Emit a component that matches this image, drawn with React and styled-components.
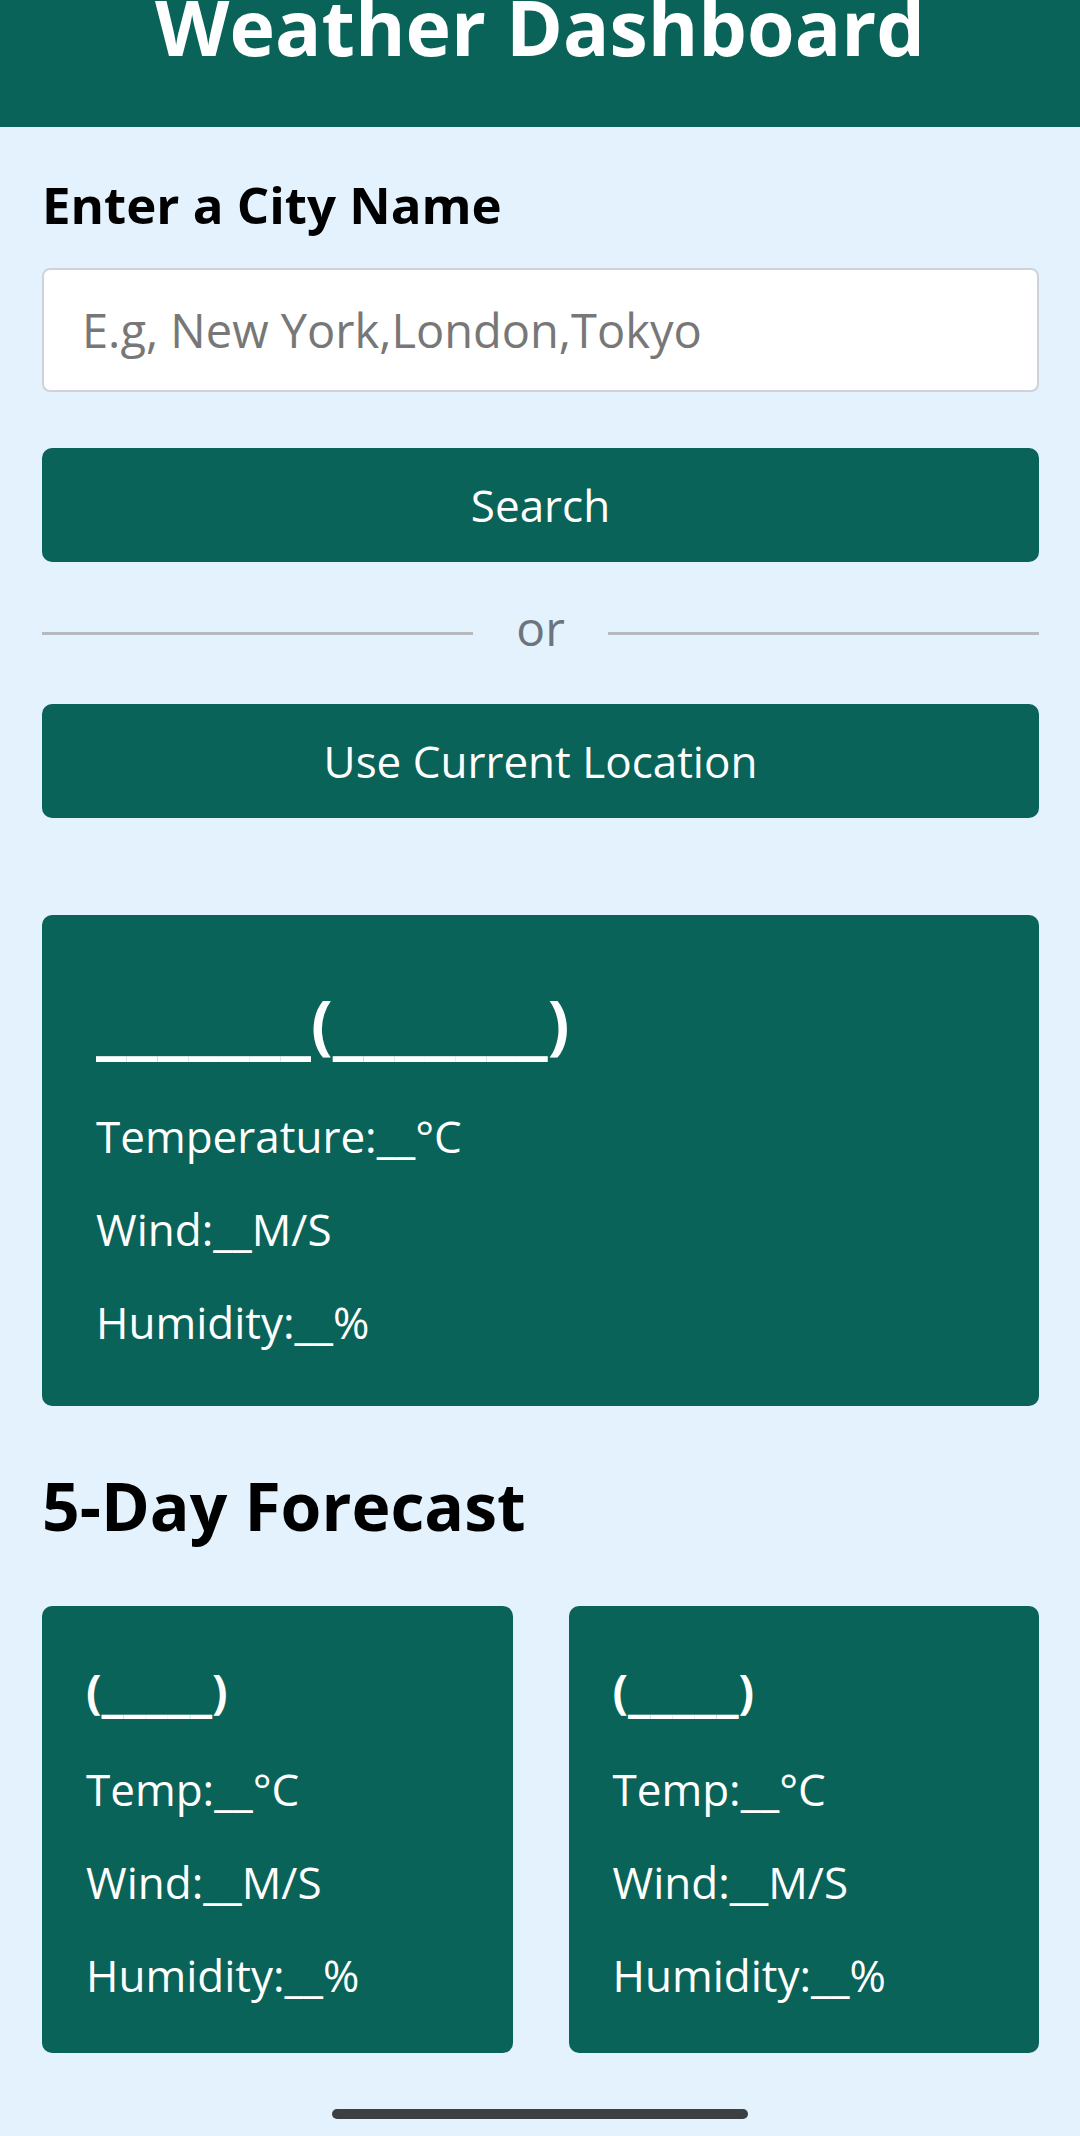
import styled, { createGlobalStyle } from "styled-components";

const GlobalStyle = createGlobalStyle`
  html, body {
    margin: 0;
    padding: 0;
    background: #e3f2fd;
    font-family: "Open Sans", "Noto Sans", sans-serif;
  }
`;

const GREEN = "#0a6358";

const Page = styled.div`
  min-height: 2136px;
  background: #e3f2fd;
`;

const Header = styled.header`
  height: 127px;
  background: ${GREEN};
  overflow: hidden;
  text-align: center;
`;

const Title = styled.h1`
  margin: -12px 0 0;
  font-size: 77px;
  line-height: 1;
  font-weight: 700;
  color: #fff;
`;

const Main = styled.main`
  display: flex;
  flex-direction: column;
  padding: 0 41px 0 42px;
`;

const Label = styled.label`
  margin-top: 43px;
  font-size: 51px;
  line-height: 68px;
  font-weight: 700;
  color: #000;
`;

const CityInput = styled.input`
  box-sizing: border-box;
  margin-top: 30px;
  height: 124px;
  width: 100%;
  padding: 0 38px;
  border: 2px solid #cdd3d8;
  border-radius: 8px;
  background: #fff;
  font-family: inherit;
  font-size: 47px;
  color: #222;

  &::placeholder {
    color: #777;
  }
`;

const Button = styled.button`
  margin-top: ${(p) => p.$top || 0}px;
  height: 114px;
  width: 100%;
  border: 0;
  border-radius: 10px;
  background: ${GREEN};
  color: #fff;
  font-family: inherit;
  font-size: 44px;
  cursor: pointer;
`;

const Divider = styled.div`
  display: flex;
  align-items: center;
  height: 70px;
  margin: 36px 0;

  &::before,
  &::after {
    content: "";
    flex: 1;
    height: 3px;
    background: #b6babf;
  }
`;

const Or = styled.span`
  padding: 0 43px 12px;
  font-size: 48px;
  color: #6c757d;
`;

const Card = styled.section`
  display: flex;
  flex-direction: column;
  gap: 37px;
  padding: ${(p) => (p.$small ? "53px 44px 50px" : "64px 54px 56px")};
  border-radius: 10px;
  background: ${GREEN};
  color: #fff;
`;

const CurrentCard = styled(Card)`
  margin-top: 97px;
`;

const CardTitle = styled.h2`
  margin: 0 0 ${(p) => (p.$small ? 2 : 5)}px;
  font-size: ${(p) => (p.$small ? 46 : 64)}px;
  font-weight: 700;
  line-height: 1.362;
`;

// the placeholder blanks use a font with a wider underscore
const Blank = styled.span`
  font-family: "DejaVu Sans", sans-serif;
  font-size: 0.96em;
  line-height: 1;
`;

const Stat = styled.p`
  margin: 0;
  font-size: 44px;
  line-height: 56px;
`;

const SectionTitle = styled.h2`
  margin: 54px 0 0;
  font-size: 66px;
  font-weight: 700;
  line-height: 90px;
  color: #000;
`;

const ForecastGrid = styled.div`
  display: grid;
  grid-template-columns: 1fr 1fr;
  column-gap: 56px;
  row-gap: 100px;
  margin-top: 56px;
  padding-bottom: 80px;
`;

const HomeBar = styled.div`
  position: fixed;
  left: 332px;
  bottom: 17px;
  width: 416px;
  height: 10px;
  border-radius: 5px;
  background: #3c4043;
`;

const days = [1, 2, 3, 4, 5];

const App = () => {
  return (
    <Page>
      <GlobalStyle />
      <Header>
        <Title>Weather Dashboard</Title>
      </Header>
      <Main>
        <Label htmlFor="city">Enter a City Name</Label>
        <CityInput id="city" placeholder="E.g, New York,London,Tokyo" />
        <Button $top={56}>Search</Button>
        <Divider>
          <Or>or</Or>
        </Divider>
        <Button>Use Current Location</Button>

        <CurrentCard>
          <CardTitle>
            <Blank>_______</Blank>(<Blank>_______</Blank>)
          </CardTitle>
          <Stat>Temperature:__°C</Stat>
          <Stat>Wind:__M/S</Stat>
          <Stat>Humidity:__%</Stat>
        </CurrentCard>

        <SectionTitle>5-Day Forecast</SectionTitle>
        <ForecastGrid>
          {days.map((d) => (
            <Card key={d} $small>
              <CardTitle $small>
                (<Blank>_____</Blank>)
              </CardTitle>
              <Stat>Temp:__°C</Stat>
              <Stat>Wind:__M/S</Stat>
              <Stat>Humidity:__%</Stat>
            </Card>
          ))}
        </ForecastGrid>
      </Main>
      <HomeBar />
    </Page>
  );
};

export default App;
